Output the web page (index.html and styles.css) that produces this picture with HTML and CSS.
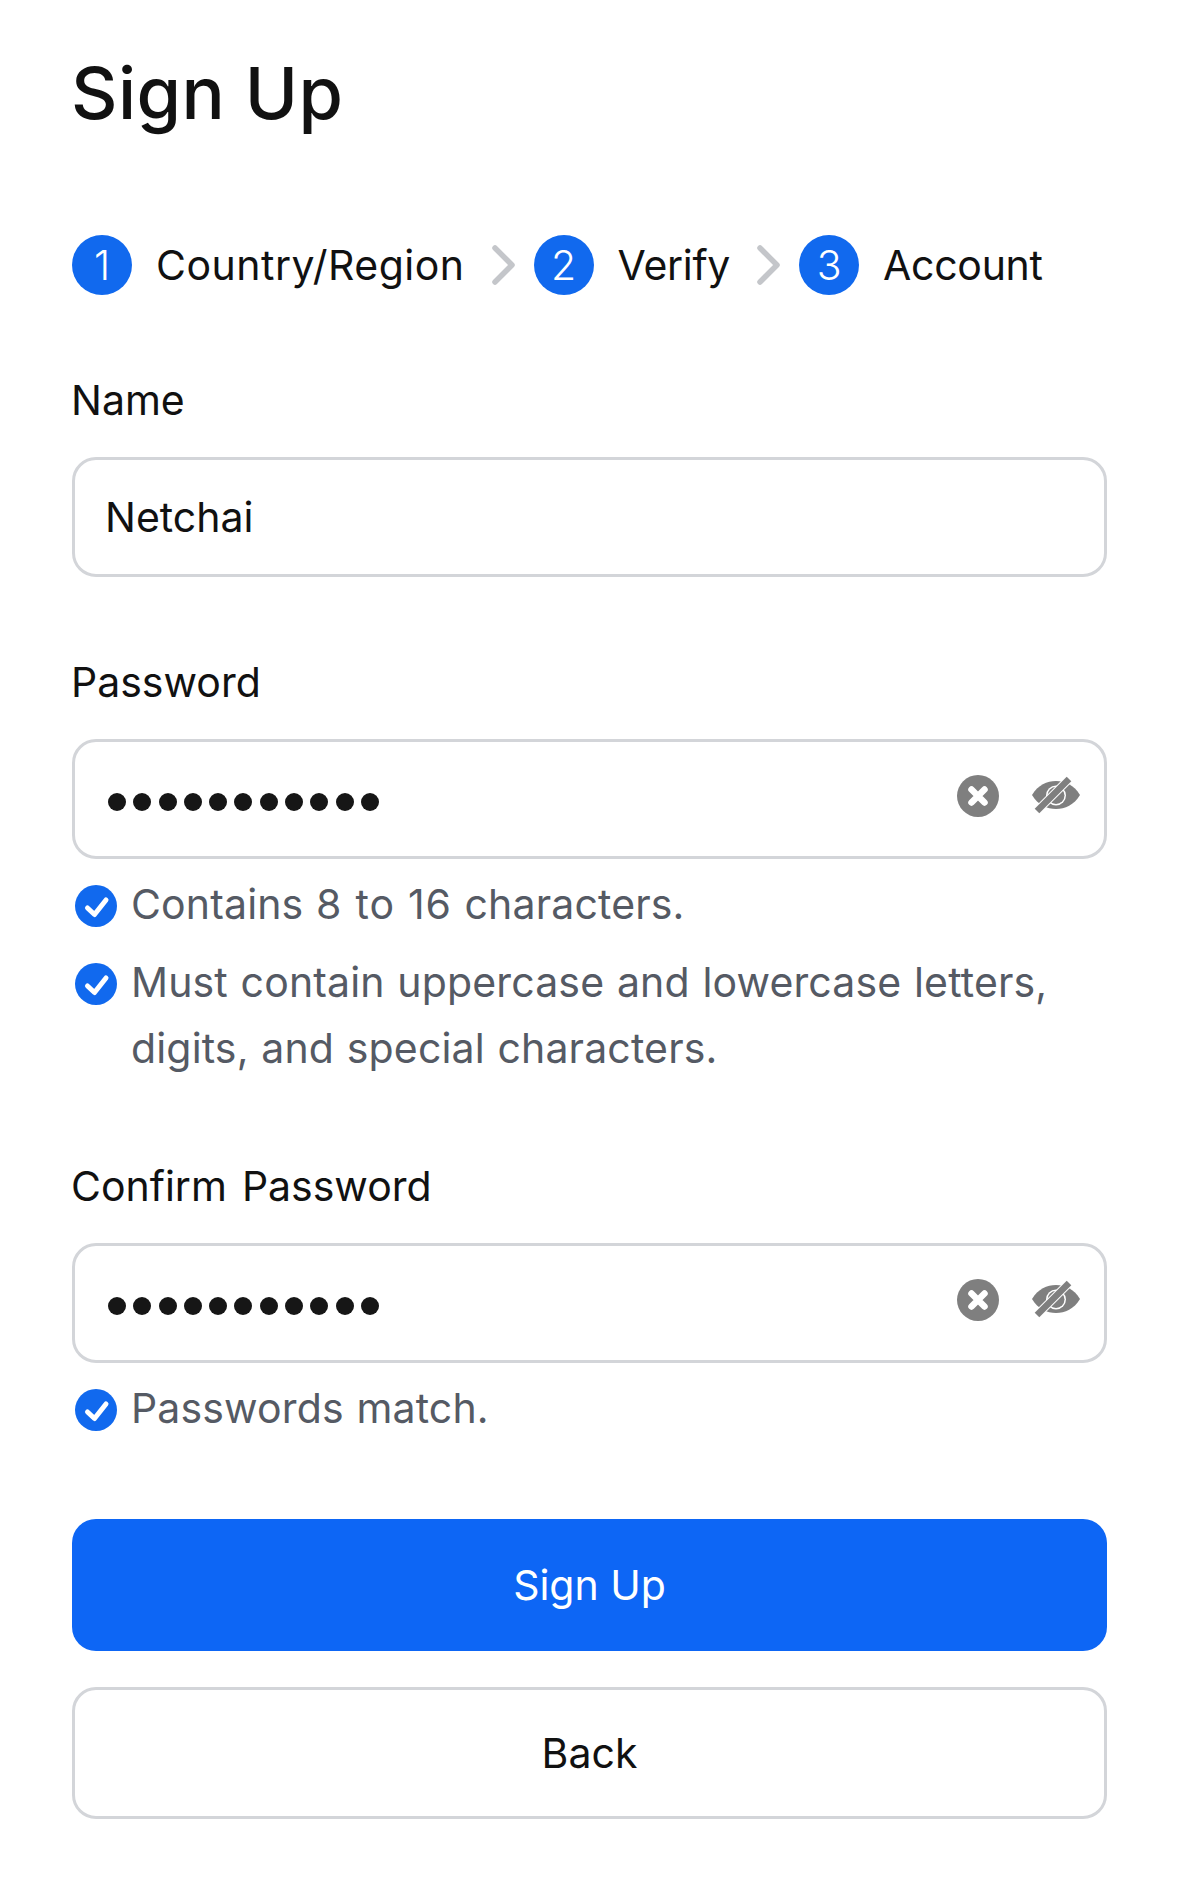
FILE: index.html
```html
<!DOCTYPE html>
<html lang="en">
<head>
    <meta charset="UTF-8">
    <title>Sign Up</title>
    <link rel="stylesheet" href="styles.css">
</head>
<body>
<main class="page">
    <h1 class="title">Sign Up</h1>

    <ol class="steps">
        <li class="step"><span class="step-num">1</span><span class="step-text step-text-wide">Country/Region</span></li>
        <li class="step-arrow"><svg width="26" height="42" viewBox="0 0 26 42"><path d="M4 4 L21 21 L4 38" fill="none" stroke="#c4c6ca" stroke-width="5.5" stroke-linecap="round" stroke-linejoin="round"/></svg></li>
        <li class="step"><span class="step-num">2</span><span class="step-text">Verify</span></li>
        <li class="step-arrow"><svg width="26" height="42" viewBox="0 0 26 42"><path d="M4 4 L21 21 L4 38" fill="none" stroke="#c4c6ca" stroke-width="5.5" stroke-linecap="round" stroke-linejoin="round"/></svg></li>
        <li class="step"><span class="step-num">3</span><span class="step-text">Account</span></li>
    </ol>

    <section class="field field-name">
        <label class="label">Name</label>
        <div class="input"><span class="value">Netchai</span></div>
    </section>

    <section class="field field-password">
        <label class="label">Password</label>
        <div class="input">
            <span class="dots"><i></i><i></i><i></i><i></i><i></i><i></i><i></i><i></i><i></i><i></i><i></i></span>
            <svg class="icon-clear" width="42" height="42" viewBox="0 0 42 42"><circle cx="21" cy="21" r="21" fill="#7f7f7f"/><path d="M14.500 14.500 L27.500 27.500 M27.500 14.500 L14.500 27.500" stroke="#fff" stroke-width="6.500" stroke-linecap="round"/></svg>
            <svg class="icon-eye" width="48" height="38" viewBox="0 0 48 38"><path d="M0 19 C6 9 15 5 24 5 C33 5 42 9 48 19 C42 29 33 33 24 33 C15 33 6 29 0 19 Z" fill="#7f7f7f"/><circle cx="24" cy="19.500" r="10" fill="#fff"/><circle cx="24" cy="19.500" r="8.500" fill="#7f7f7f"/><path d="M5 35 L37 3" stroke="#fff" stroke-width="8.500"/><path d="M5 35 L37 3" stroke="#7f7f7f" stroke-width="6.500"/></svg>
        </div>
        <ul class="hints">
            <li class="hint"><svg class="check" width="42" height="42" viewBox="0 0 42 42"><circle cx="21" cy="21" r="21" fill="#1169ee"/><path d="M12.500 23 L19.500 29.500 L31 15" fill="none" stroke="#fff" stroke-width="5" stroke-linecap="round" stroke-linejoin="round"/></svg><span>Contains <span class="nums">8 to 16</span> characters.</span></li>
            <li class="hint"><svg class="check" width="42" height="42" viewBox="0 0 42 42"><circle cx="21" cy="21" r="21" fill="#1169ee"/><path d="M12.500 23 L19.500 29.500 L31 15" fill="none" stroke="#fff" stroke-width="5" stroke-linecap="round" stroke-linejoin="round"/></svg><span>Must contain uppercase and lowercase letters, digits, and special characters.</span></li>
        </ul>
    </section>

    <section class="field field-confirm">
        <label class="label">Confirm Password</label>
        <div class="input">
            <span class="dots"><i></i><i></i><i></i><i></i><i></i><i></i><i></i><i></i><i></i><i></i><i></i></span>
            <svg class="icon-clear" width="42" height="42" viewBox="0 0 42 42"><circle cx="21" cy="21" r="21" fill="#7f7f7f"/><path d="M14.500 14.500 L27.500 27.500 M27.500 14.500 L14.500 27.500" stroke="#fff" stroke-width="6.500" stroke-linecap="round"/></svg>
            <svg class="icon-eye" width="48" height="38" viewBox="0 0 48 38"><path d="M0 19 C6 9 15 5 24 5 C33 5 42 9 48 19 C42 29 33 33 24 33 C15 33 6 29 0 19 Z" fill="#7f7f7f"/><circle cx="24" cy="19.500" r="10" fill="#fff"/><circle cx="24" cy="19.500" r="8.500" fill="#7f7f7f"/><path d="M5 35 L37 3" stroke="#fff" stroke-width="8.500"/><path d="M5 35 L37 3" stroke="#7f7f7f" stroke-width="6.500"/></svg>
        </div>
        <ul class="hints">
            <li class="hint"><svg class="check" width="42" height="42" viewBox="0 0 42 42"><circle cx="21" cy="21" r="21" fill="#1169ee"/><path d="M12.500 23 L19.500 29.500 L31 15" fill="none" stroke="#fff" stroke-width="5" stroke-linecap="round" stroke-linejoin="round"/></svg><span>Passwords match.</span></li>
        </ul>
    </section>

    <button class="btn btn-primary">Sign Up</button>
    <button class="btn btn-back">Back</button>
</main>
</body>
</html>
```

FILE: styles.css
```css
* {
    box-sizing: border-box;
}

body {
    margin: 0;
    background: #fff;
    color: #111;
    font-family: Inter, "Liberation Sans", sans-serif;
}

.page {
    padding: 51px 72px 0;
    width: 1179px;
    height: 1901px;
    overflow: hidden;
}

.title {
    margin: 0 0 0 -1px;
    font-size: 72px;
    font-weight: 500;
    line-height: 84px;
    letter-spacing: 0.4px;
}

.steps {
    display: flex;
    align-items: center;
    list-style: none;
    margin: 0;
    padding: 0;
    margin-top: 100px;
    font-size: 41px;
    height: 60px;
}

.step {
    display: flex;
    align-items: center;
    gap: 24px;
}

.step-text {
    letter-spacing: -0.3px;
}

.step-text-wide {
    letter-spacing: 0.5px;
}

.step-num {
    width: 60px;
    height: 60px;
    border-radius: 50%;
    background: #1169ee;
    color: #fff;
    font-weight: 300;
    display: flex;
    align-items: center;
    justify-content: center;
}

.step-arrow {
    display: flex;
    margin: 0 17px 0 26px;
}

.label {
    display: block;
    margin-left: -1px;
    font-size: 41px;
    line-height: 50px;
    word-spacing: 3.500px;
}

.field-name {
    margin-top: 80px;
}

.field-password {
    margin-top: 80px;
}

.field-confirm {
    margin-top: 80px;
}

.input {
    display: flex;
    align-items: center;
    height: 120px;
    margin-top: 32px;
    padding: 0 24px 0 30px;
    border: 3px solid #d3d5d9;
    border-radius: 24px;
}

.value {
    font-size: 41px;
}

.dots {
    display: flex;
    gap: 7.300px;
    flex: 1;
    margin-top: 6px;
    margin-left: 3px;
}

.dots i {
    display: block;
    width: 18px;
    height: 18px;
    border-radius: 50%;
    background: #161616;
}

.icon-clear {
    margin-right: 33px;
    margin-bottom: 6px;
}

.icon-eye {
    margin-bottom: 8px;
}

.hints {
    list-style: none;
    margin: 0;
    padding: 0;
    color: #555a64;
    font-size: 41px;
    line-height: 66px;
    letter-spacing: 0.15px;
    word-spacing: 1px;
}

.nums {
    letter-spacing: 0.8px;
}

.hint {
    display: flex;
    gap: 14px;
    margin-top: 12px;
}

.check {
    flex: none;
    margin: 14px 0 0 3px;
}

.btn {
    display: block;
    width: 100%;
    height: 132px;
    border-radius: 24px;
    font: inherit;
    font-size: 41px;
}

.btn-primary {
    margin-top: 78px;
    border: none;
    background: #0d66f5;
    color: #fff;
}

.btn-back {
    margin-top: 36px;
    border: 3px solid #d3d5d9;
    background: #fff;
    color: #111;
}
```
